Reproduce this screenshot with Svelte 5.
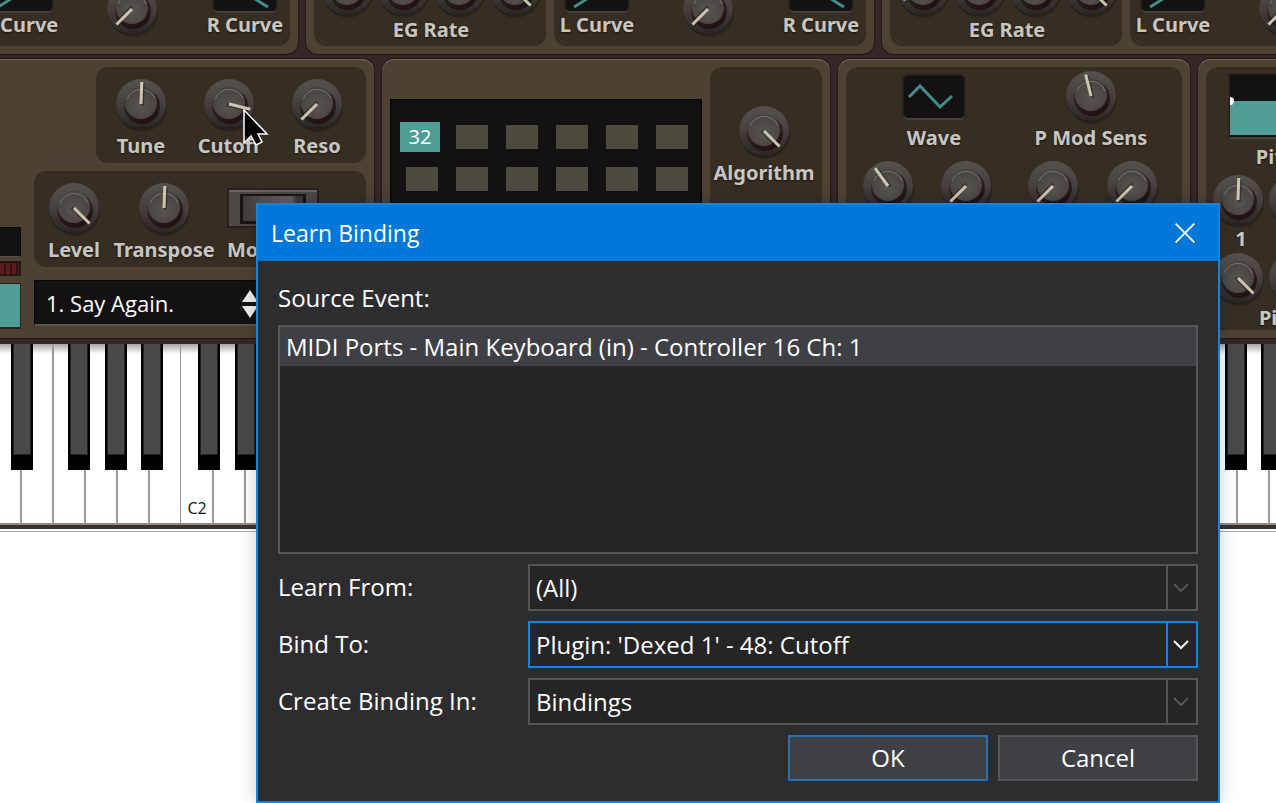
<script>
  const operators = [
    { eg: [0, 0, 0, 135], mid: -135 },
    { eg: [-100, 0, 0, 135], mid: -135 },
    { eg: [-116, 0, 0, 135], mid: -135 },
  ];
  const octaves = [1, 2, 3, 4, 5, 6, 7, 8, 9, 10, 11, 12];
  const blackKeys = [17, 54, 111, 148, 184];
  const whiteEdges = [32, 64, 96, 128, 160, 192, 224];
  const lfoKnobs = [-36, -135, -135, -135];
  const cells = Array.from({ length: 12 }, (_, i) => i);

  let events = ['MIDI Ports - Main Keyboard (in) - Controller 16 Ch: 1'];
  let fields = [
    { id: 'learn-from', label: 'Learn From:', value: '(All)', active: false },
    { id: 'bind-to', label: 'Bind To:', value: "Plugin: 'Dexed 1' - 48: Cutoff", active: true },
    { id: 'create-in', label: 'Create Binding In:', value: 'Bindings', active: false },
  ];
</script>

{#snippet dial(angle, name)}
  <span class="dial">
    <svg width="56" height="56" viewBox="-28 -28 56 56" aria-hidden="true">
      <circle cx="1" cy="3" r="25" fill="#15100c" opacity=".3" />
      <circle cx="0" cy="1" r="25" fill="#211d1b" />
      <circle cx="0" cy="0" r="25" fill="url(#rim)" />
      <circle cx="1" cy="2" r="18" fill="url(#well)" />
      <circle cx="0" cy="-1" r="16" fill="url(#cap)" />
      <path d="M-14-5A15 15 0 0 1 14-5" fill="none" stroke="#85806a" stroke-width="1" opacity=".8" />
      <g transform="rotate({angle})">
        <path d="M1.5 2V-20" stroke="#171310" stroke-width="3" opacity=".4" />
        <path d="M0 0V-22" stroke="#c9c5ae" stroke-width="3" />
      </g>
    </svg>
    <input type="range" min="-135" max="135" value={angle} aria-label={name} />
  </span>
{/snippet}

{#snippet knob(angle, name)}
  <div class="knob">
    {@render dial(angle, name)}
    <span class="caption">{name}</span>
  </div>
{/snippet}

<svg class="defs" width="0" height="0" aria-hidden="true">
  <defs>
    <linearGradient id="rim" x1="0" y1="0" x2="0" y2="1">
      <stop offset="0" stop-color="#57514e" />
      <stop offset=".5" stop-color="#45403e" />
      <stop offset="1" stop-color="#292524" />
    </linearGradient>
    <linearGradient id="well" x1="0" y1="0" x2=".4" y2="1">
      <stop offset="0" stop-color="#3a3433" stop-opacity=".2" />
      <stop offset=".5" stop-color="#302221" />
      <stop offset="1" stop-color="#221214" />
    </linearGradient>
    <radialGradient id="cap" cx=".5" cy=".6" r=".6">
      <stop offset="0" stop-color="#5a5451" />
      <stop offset="1" stop-color="#47413f" />
    </radialGradient>
    <linearGradient id="keyshade" x1="0" y1="0" x2="0" y2="1">
      <stop offset="0" stop-color="#000" stop-opacity=".35" />
      <stop offset="1" stop-color="#000" stop-opacity="0" />
    </linearGradient>
  </defs>
</svg>

<main class="desktop">
  <section class="synth">
    <div class="operators">
      {#each operators as op}
        <div class="panel operator">
          <div class="group eg">
            <div class="four">
              {#each op.eg as a, i}{@render dial(a, 'EG Rate ' + (i + 1))}{/each}
            </div>
            <span class="caption">EG Rate</span>
          </div>
          <div class="group scaling">
            <div class="curve">
              <svg class="screen" width="62" height="42" viewBox="0 0 62 42"><path d="M8 38Q22 30 54 6" /></svg>
              <span class="caption">L Curve</span>
            </div>
            <div class="curve">{@render dial(op.mid, 'Break point')}</div>
            <div class="curve">
              <svg class="screen" width="62" height="42" viewBox="0 0 62 42"><path d="M8 6Q40 30 54 38" /></svg>
              <span class="caption">R Curve</span>
            </div>
          </div>
        </div>
      {/each}
    </div>

    <div class="globals">
      <div class="panel master">
        <div class="meters">
          <div class="lcd"></div>
          <div class="leds"></div>
          <button class="pad" aria-label="Store"></button>
        </div>
        <div class="controls">
          <div class="group trio">
            {@render knob(2, 'Tune')}
            {@render knob(104, 'Cutoff')}
            {@render knob(-135, 'Reso')}
          </div>
          <div class="group levels">
            {@render knob(135, 'Level')}
            {@render knob(2, 'Transpose')}
            <div class="knob mono">
              <span class="rocker">
                <svg width="92" height="40" viewBox="0 0 92 40" aria-hidden="true">
                  <defs>
                    <linearGradient id="rocker-face" x1="0" y1="0" x2="1" y2="0">
                      <stop offset="0" stop-color="#413c39" />
                      <stop offset=".35" stop-color="#57524c" />
                      <stop offset=".8" stop-color="#67625a" />
                      <stop offset=".9" stop-color="#3c3733" />
                    </linearGradient>
                  </defs>
                  <rect width="92" height="40" fill="#262120" />
                  <rect x="2" y="2" width="88" height="36" fill="#4c4744" />
                  <path d="M2 3H90" stroke="#6a6562" stroke-width="2" />
                  <rect x="13" y="6" width="66" height="30" fill="#191514" />
                  <rect x="16" y="8" width="60" height="25" fill="url(#rocker-face)" />
                </svg>
              </span>
              <span class="caption">Mono</span>
            </div>
          </div>
          <button class="program">
            <span>1. Say Again.</span>
          </button>
        </div>
        <svg class="stepper" width="16" height="28" viewBox="0 0 16 28" aria-hidden="true">
          <path d="M8 0L16 12H0zM8 28L16 16H0z" fill="#eee" />
        </svg>
      </div>

      <div class="panel algorithm">
        <div class="matrix">
          {#each cells as c}
            <span class="cell" class:on={c === 0}>{c === 0 ? '32' : ''}</span>
          {/each}
        </div>
        <div class="group picker">{@render knob(135, 'Algorithm')}</div>
      </div>

      <div class="panel">
        <div class="group lfo">
          <div class="shape">
            <div class="knob">
              <svg class="screen" width="60" height="42" viewBox="0 0 60 42"><path d="M5 21L16 10L36 31L48 20" /></svg>
              <span class="caption">Wave</span>
            </div>
            {@render knob(-14, 'P Mod Sens')}
          </div>
          <div class="rates">
            {#each lfoKnobs as a, i}{@render dial(a, 'LFO ' + (i + 1))}{/each}
          </div>
        </div>
      </div>

      <div class="panel">
        <div class="group pitch">
          <svg class="envelope" width="184" height="62" viewBox="0 0 184 62">
            <rect width="184" height="62" fill="#131112" />
            <rect y="26" width="184" height="34" fill="#4e9d97" />
            <circle cx="0" cy="26" r="4" fill="#fff" />
          </svg>
          <span class="caption levels-caption">Pitch EG Level</span>
          <div class="four">
            {#each [1, 2, 3, 4] as n}{@render dial(2, 'Level ' + n)}{/each}
          </div>
          <div class="four numbers">
            {#each [1, 2, 3, 4] as n}<span class="caption">{n}</span>{/each}
          </div>
          <div class="four">
            {#each [1, 2, 3, 4] as n}{@render dial(135, 'Rate ' + n)}{/each}
          </div>
          <span class="caption">Pitch EG Rate</span>
        </div>
      </div>
    </div>

    <div class="piano">
      {#each octaves as o}
        <svg width="224" height="181" viewBox="0 0 224 181">
          <rect width="224" height="181" fill="#fff" />
          <rect width="224" height="10" fill="url(#keyshade)" />
          {#each whiteEdges as x}<rect x={x - 1} width="2" height="181" fill="#999" />{/each}
          <rect y="179" width="224" height="2" fill="#8f8d8c" />
          {#each blackKeys as x}
            <rect {x} width="22" height="126" fill="#000" />
            <rect x={x + 2} width="18" height="111" fill="#222" />
            <rect x={x + 3} width="16" height="110" fill="#494949" />
          {/each}
          <text x="16" y="170">C{o}</text>
        </svg>
      {/each}
    </div>
  </section>

  <svg class="pointer" width="26" height="38" viewBox="0 0 26 38" aria-hidden="true">
    <path d="M1 1V34L8 27L13 36L19 33L15 25H24z" fill="#000" stroke="#fff" stroke-width="1.5" />
  </svg>

  <div class="dialog" role="dialog" aria-labelledby="dialog-title">
    <header>
      <h1 id="dialog-title">Learn Binding</h1>
      <button class="close" aria-label="Close">
        <svg width="20" height="20" viewBox="0 0 20 20"><path d="M.7.7L19.3 19.3M19.3.7L.7 19.3" stroke="#fff" stroke-width="1.8" /></svg>
      </button>
    </header>
    <form onsubmit={(e) => e.preventDefault()}>
      <span class="heading" id="source-label">Source Event:</span>
      <ul class="events" role="listbox" aria-labelledby="source-label">
        {#each events as event}<li role="option" aria-selected="true">{event}</li>{/each}
      </ul>
      {#each fields as f}
        <div class="field" class:active={f.active}>
          <label for={f.id}>{f.label}</label>
          <div class="combo">
            <select id={f.id}><option>{f.value}</option></select>
            <span class="arrow">
              <svg width="16" height="10" viewBox="0 0 16 10"><path d="M1 1L8 8L15 1" fill="none" stroke="currentColor" stroke-width="2" /></svg>
            </span>
          </div>
        </div>
      {/each}
      <div class="actions">
        <button class="ok">OK</button>
        <button type="button">Cancel</button>
      </div>
    </form>
  </div>
</main>

<style>
  :global(body) { margin: 0; background: #fff; }
  * { box-sizing: border-box; }
  .defs { position: absolute; }
  .desktop {
    position: relative;
    min-height: 100vh;
    overflow: hidden;
    font-family: "Open Sans", "Noto Sans", sans-serif;
  }
  svg { display: block; }
  .synth {
    overflow: hidden;
    padding-bottom: 2px;
    border-bottom: 1px solid #aaa;
    background: linear-gradient(to top, #fff 2px, #332827 2px);
  }

  .panel {
    display: flex;
    flex: none;
    gap: 8px;
    padding: 8px;
    background: #4d4132;
    border-radius: 12px;
    box-shadow: 0 0 1px 1px #211712, inset 0 1px 1px #766b57;
  }
  .group { background: #362e23; border-radius: 12px; }
  .caption {
    color: #c8c6c2;
    font-family: "Noto Sans", sans-serif;
    font-weight: 700;
    font-size: 20px;
    line-height: 24px;
    text-align: center;
    white-space: nowrap;
    text-shadow: 0 1px 2px #1a1510;
  }
  .dial { position: relative; display: block; width: 56px; height: 56px; }
  .dial input { position: absolute; inset: 0; width: 100%; height: 100%; margin: 0; opacity: 0; }
  .knob { display: flex; flex-direction: column; align-items: center; gap: 2px; }
  .four { display: flex; }
  .screen {
    background: #131112;
    border-radius: 4px;
    box-shadow: 0 2px 1px #46403e, 0 0 2px 1px #1c1713;
  }
  .screen path { fill: none; stroke: #438d87; stroke-width: 3; }

  .operators {
    display: flex;
    align-items: flex-end;
    gap: 8px;
    height: 54px;
    margin-left: -270px;
  }
  .operator { width: 568px; align-items: stretch; }
  .eg { width: 232px; padding: 0 3px 4px 5px; display: flex; flex-direction: column; align-items: center; }
  .scaling { flex: 1; display: grid; grid-template-columns: 86px 1fr 90px; padding-bottom: 9px; }
  .curve { display: flex; flex-direction: column; align-items: center; justify-content: flex-end; gap: 2px; }

  .globals {
    display: flex;
    gap: 8px;
    min-height: 278px;
    margin: 5px 0 6px -14px;
  }
  .master { position: relative; width: 388px; padding-left: 0; gap: 12px; }
  .meters { width: 35px; display: flex; flex-direction: column; align-items: stretch; gap: 4px; padding: 160px 0 1px; }
  .lcd { height: 30px; background: #131112; border: 1px solid #0a0806; border-bottom-color: #56504a; }
  .leds { height: 15px; border: 2px solid #241816; background: repeating-linear-gradient(90deg, #5c1a18 0 4px, #2c1716 4px 6px); }
  .pad { height: 46px; margin-top: 3px; border: 1px solid #28241e; border-bottom: 2px solid #28241e; background: #4e9d97; }
  .controls { flex: 1; display: flex; flex-direction: column; align-items: flex-end; gap: 8px; }
  .trio { display: grid; grid-template-columns: 88px 88px 88px; width: 270px; height: 96px; padding: 9px 0 0 1px; }
  .levels { display: grid; grid-template-columns: 80px 100px 120px; width: 332px; height: 96px; padding-top: 9px; }
  .mono { align-items: flex-start; padding-left: 13px; }
  .rocker { display: flex; align-items: center; height: 56px; }
  .program {
    width: 332px;
    height: 46px;
    margin-top: 5px;
    padding: 0 11px;
    border: 1px solid #0a0806;
    border-bottom: 2px solid #5b554f;
    background: #131112;
    color: #fff;
    font: 22px/30px "Open Sans", sans-serif;
    text-align: left;
  }
  .stepper { position: absolute; left: 256px; bottom: 20px; }

  .algorithm { width: 448px; }
  .matrix {
    flex: 1;
    display: grid;
    grid-template-columns: repeat(6, 50px);
    grid-auto-rows: 42px;
    align-content: start;
    place-items: center;
    margin-top: 32px;
    padding: 17px 5px 17px 7px;
    background: #131112;
    box-shadow: inset 0 0 2px 1px #050404;
  }
  .cell { width: 32px; height: 24px; background: #4c4a3f; }
  .cell.on {
    width: 40px;
    height: 30px;
    background: #4e9d97;
    color: #fff;
    font-size: 20px;
    line-height: 30px;
    text-align: center;
    margin-right: 4px;
  }
  .picker { width: 112px; padding: 36px 4px 0 0; }

  .lfo { width: 336px; padding-top: 0; }
  .shape { display: grid; grid-template-columns: 176px 138px; align-items: end; padding-top: 1px; }
  .shape .screen { margin-bottom: 6px; }
  .rates { display: grid; grid-template-columns: 78px 87px 79px 56px; padding: 8px 0 0 14px; }

  .pitch { width: 232px; display: flex; flex-direction: column; align-items: center; padding-top: 8px; }
  .pitch .caption { padding-left: 6px; }
  .levels-caption { margin: 8px 0 3px; }
  .envelope { box-shadow: 0 2px 1px #46403e, 0 0 1px 1px #1c1713; }
  .numbers .caption { width: 56px; line-height: 22px; }

  .piano { display: flex; margin-left: -43px; border-bottom: 4px solid #3a302e; }
  .piano svg { flex: none; }
  .piano text { font: 16px "Open Sans", sans-serif; text-anchor: middle; fill: #111; }

  .pointer { position: absolute; left: 243px; top: 109px; }

  .dialog {
    position: absolute;
    left: 256px;
    right: 56px;
    top: 203px;
    border: 2px solid #1a82d8;
    background: #2d2d30;
    color: #fff;
    box-shadow: 0 0 16px rgba(0, 0, 0, .2);
    font-size: 24px;
    line-height: 32px;
  }
  header { display: flex; align-items: center; justify-content: space-between; height: 56px; padding: 0 23px 0 13px; background: #0078d9; }
  h1 { margin: 0; font-size: 23px; font-weight: 400; line-height: 32px; }
  .close { padding: 0; border: 0; background: none; }
  form { display: flex; flex-direction: column; gap: 10px; padding: 21px 20px 20px; }
  .heading { padding-bottom: 1px; }
  .events { margin: 0; padding: 0; height: 229px; list-style: none; border: 2px solid #555; background: #252525; }
  .events li { padding: 4px 6px 3px; background: #3f3f46; }
  .field { display: grid; grid-template-columns: 250px 1fr; align-items: center; }
  .field label { padding-bottom: 2px; }
  .combo { position: relative; height: 47px; border: 2px solid #555; background: #252525; }
  select {
    appearance: none;
    width: 100%;
    height: 43px;
    padding: 0 38px 0 6px;
    border: 0;
    outline: 0;
    background: none;
    color: #fff;
    font: 24px/32px "Open Sans", sans-serif;
  }
  .arrow {
    position: absolute;
    inset: 0 0 0 auto;
    width: 30px;
    display: grid;
    place-items: center;
    padding-right: 2px;
    border-left: 2px solid #555;
    color: #555;
    pointer-events: none;
  }
  .active .combo, .active .arrow { border-color: #0a84ef; }
  .active .arrow { color: #fff; }
  .actions { display: flex; justify-content: flex-end; gap: 10px; }
  .actions button {
    width: 200px;
    height: 46px;
    padding: 0;
    border: 2px solid #555;
    background: #3f3f46;
    color: #fff;
    font: 24px/32px "Open Sans", sans-serif;
  }
  .actions .ok { border-color: #2a70b0; }
</style>
